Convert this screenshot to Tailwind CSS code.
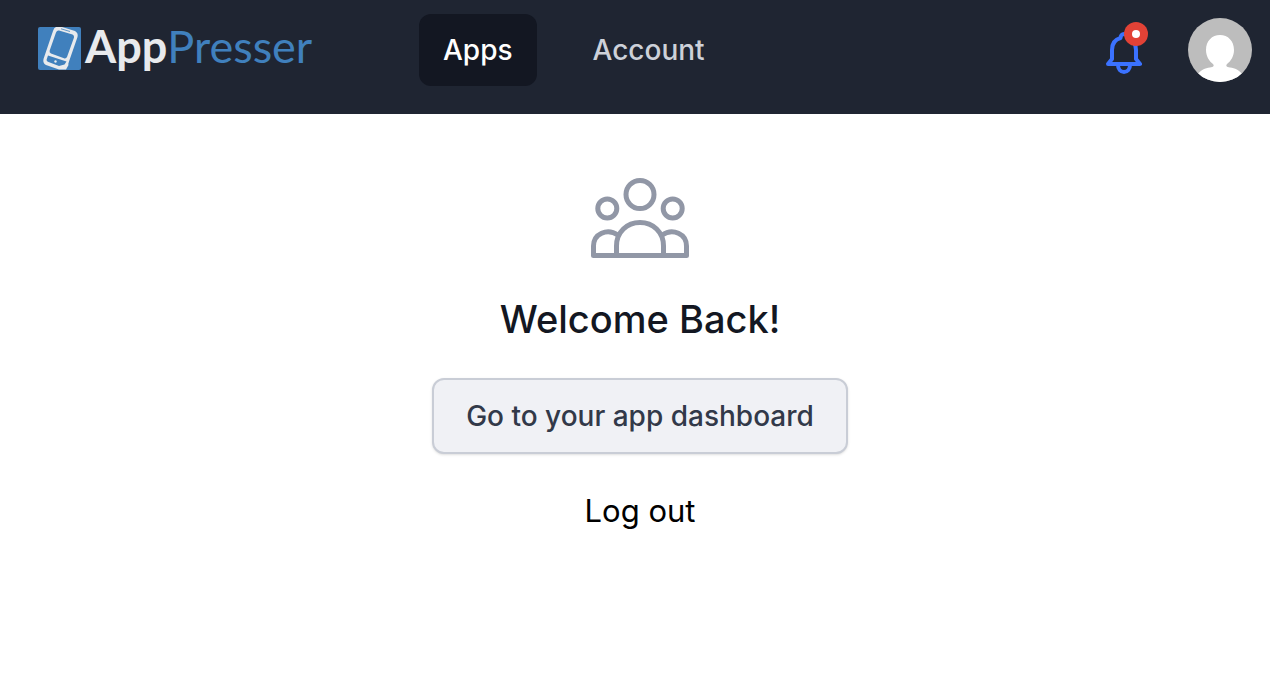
<!DOCTYPE html>
<html lang="en">
<head>
  <meta charset="UTF-8" />
  <meta name="viewport" content="width=device-width, initial-scale=1.0" />
  <title>AppPresser</title>
  <script src="https://cdn.jsdelivr.net/npm/@tailwindcss/browser@4"></script>
</head>
<body class="bg-white min-h-screen font-['Inter',sans-serif]">

  <header class="bg-[#1f2532] flex items-start justify-between pt-3.5 pb-7 pl-[38px] pr-[18px]">
    <div class="flex items-start">
      <!-- Logo -->
      <a href="#" class="flex items-center gap-1 h-[68px] w-[381px] font-['Lato',sans-serif] text-[45px] leading-[52px]">
        <svg class="w-[43px] h-[43px] shrink-0" viewBox="0 0 43 43" aria-hidden="true">
          <rect width="43" height="43" rx="2" fill="#4080bd" />
          <path d="M18 0H24L37 4Q40.500 6 39.500 10L31 34.500Q30 37 30.500 38L28 42.500H21L8 38Q4.500 36 5.500 32L15 4Q16 0.500 18 0Z" fill="#e8eaed" />
          <path d="M21 3.500L34.500 7.500Q36.500 8.500 36 10.500L29 30Q28 32 26 31.300L13 26.500Q11 25.500 11.700 23.500L18 5.500Q19 3 21 3.500Z" fill="#4080bd" />
          <path d="M10 28.500L28.500 34.500L26.500 37.500L21 39L10.500 35Q8 34 8.800 32Z" fill="#4080bd" />
          <path d="M23 1.800L32 4.500" stroke="#4080bd" stroke-width="0.800" />
          <circle cx="17.500" cy="34.500" r="1.200" fill="#e8eaed" />
        </svg>
        <span class="flex pb-1"><span class="font-bold text-[#e8eaed]">App</span><span class="font-normal text-[#4080bd]">Presser</span></span>
      </a>
      <nav class="flex gap-8 text-[28px] leading-10 font-medium">
        <a href="#" class="bg-[#131722] text-white rounded-xl px-6 py-4">Apps</a>
        <a href="#" class="text-[#cdd1d9] rounded-xl px-6 py-4">Account</a>
      </nav>
    </div>

    <div class="flex items-center gap-[46px] pt-1">
      <button type="button" aria-label="Notifications" class="relative">
        <svg class="w-9 h-12" viewBox="0 0 36 48" fill="none" stroke="#3b72ff" stroke-width="4" stroke-linejoin="round" aria-hidden="true">
          <path d="M2 38L6 33V24C6 17 9 13.500 14.500 12C14.500 9.500 16 8 18 8S21.500 9.500 21.500 12C27 13.500 30 17 30 24V33L34 38Z" />
          <path d="M12 39C12 43 14.500 46 18 46S24 43 24 39" />
        </svg>
        <span class="absolute -top-1 -right-1.5 w-6 h-6 rounded-full bg-[#e24236] flex items-center justify-center">
          <span class="w-2 h-2 rounded-full bg-white"></span>
        </span>
      </button>
      <button type="button" aria-label="Your profile" class="w-16 h-16 rounded-full overflow-hidden bg-[#bdbdbd]">
        <svg class="w-16 h-16" viewBox="0 0 64 64" fill="#fff" aria-hidden="true">
          <path d="M32 17C40 17 46 23 46 32C46 38 43 43 39 46C37.500 48 38.500 49 42 49.500C47 50 51 52 55 57V64H9V57C13 52 17 50 22 49.500C25.500 49 26.500 48 25 46C21 43 18 38 18 32C18 23 24 17 32 17Z" />
        </svg>
      </button>
    </div>
  </header>

  <main class="flex flex-col items-center pt-16 pl-2.5">
    <svg class="w-[98px] h-20" viewBox="0 0 98 80" fill="none" stroke="#9197a6" stroke-width="5" stroke-linejoin="round" aria-hidden="true">
      <circle cx="49" cy="16.500" r="14" />
      <circle cx="16.300" cy="30.500" r="9.500" />
      <circle cx="81.700" cy="30.500" r="9.500" />
      <path d="M25.500 77.500V68C25.500 54 36 44.500 49 44.500S72.500 54 72.500 68V77.500" />
      <path d="M27 57C16 49.500 2.500 56 2.500 68V77.500H95.500V68C95.500 56 82 49.500 71 57" />
    </svg>
    <h1 class="mt-9 text-[38px] leading-[50px] font-medium text-[#131722]">Welcome Back!</h1>
    <a href="#" class="mt-[34px] px-8 py-4 border-2 border-[#c9cdd6] rounded-xl bg-[#f0f1f5] shadow-sm text-[28px] leading-10 font-medium text-[#323949]">Go to your app dashboard</a>
    <a href="#" class="mt-8 text-[31px] leading-[50px] text-black">Log out</a>
  </main>

</body>
</html>
